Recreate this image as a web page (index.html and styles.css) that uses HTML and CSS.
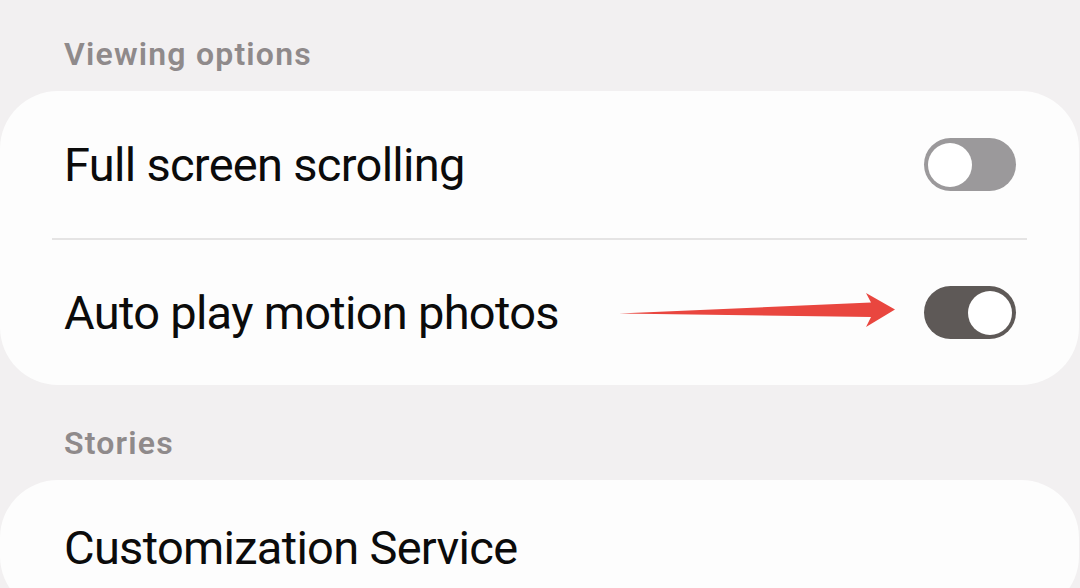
FILE: index.html
```html
<!DOCTYPE html>
<html lang="en">
<head>
<meta charset="utf-8">
<title>Gallery settings</title>
<link rel="stylesheet" href="styles.css">
</head>
<body>
<div class="page">
  <div class="section-title">Viewing options</div>
  <div class="card">
    <div class="row">
      <span class="label">Full screen scrolling</span>
      <span class="switch off"><span class="knob"></span></span>
    </div>
    <div class="divider"></div>
    <div class="row row-last">
      <span class="label">Auto play motion photos</span>
      <span class="switch on"><span class="knob"></span></span>
    </div>
  </div>
  <div class="section-title section-title-next">Stories</div>
  <div class="card">
    <div class="row row-first">
      <span class="label">Customization Service</span>
    </div>
  </div>
  <svg class="arrow" width="300" height="50" viewBox="600 285 300 50" aria-hidden="true">
    <polygon points="619,313.5 871,302.5 866,293 895,309.5 866,327 871,317" fill="#e9463f"/>
  </svg>
</div>
</body>
</html>
```
FILE: styles.css
```css
html, body {
  margin: 0;
  padding: 0;
  background: #f2f0f1;
}
body {
  font-family: Roboto, "Noto Sans", "Liberation Sans", sans-serif;
  width: 1080px;
  height: 588px;
  overflow: hidden;
}
.page {
  position: relative;
  width: 1080px;
  height: 588px;
  overflow: hidden;
}
.section-title {
  padding: 36px 64px 19px;
  line-height: 36px;
  font-size: 32px;
  font-weight: 600;
  letter-spacing: 1.2px;
  color: #8f8a8b;
}
.section-title-next {
  padding-top: 40px;
}
.card {
  background: #fdfdfd;
  margin: 0 1px 0 0;
  border-radius: 58px;
}
.row {
  height: 147px;
  display: flex;
  align-items: center;
  justify-content: space-between;
  padding: 0 63px 0 64px;
}
.row-last {
  height: 145px;
}
.row-first {
  height: 134px;
}
.label {
  font-size: 47px;
  color: #0b0b0b;
  letter-spacing: -0.7px;
}
.divider {
  height: 2px;
  margin: 0 52px;
  background: #e5e4e4;
}
.switch {
  width: 92px;
  height: 53px;
  border-radius: 27px;
  box-sizing: border-box;
  padding: 4px;
  display: flex;
  align-items: center;
}
.switch.off {
  background: #9b999b;
  justify-content: flex-start;
}
.switch.on {
  background: #5e5957;
  justify-content: flex-end;
}
.knob {
  width: 44px;
  height: 44px;
  border-radius: 50%;
  background: #ffffff;
}
.arrow {
  position: absolute;
  left: 600px;
  top: 285px;
}
```
